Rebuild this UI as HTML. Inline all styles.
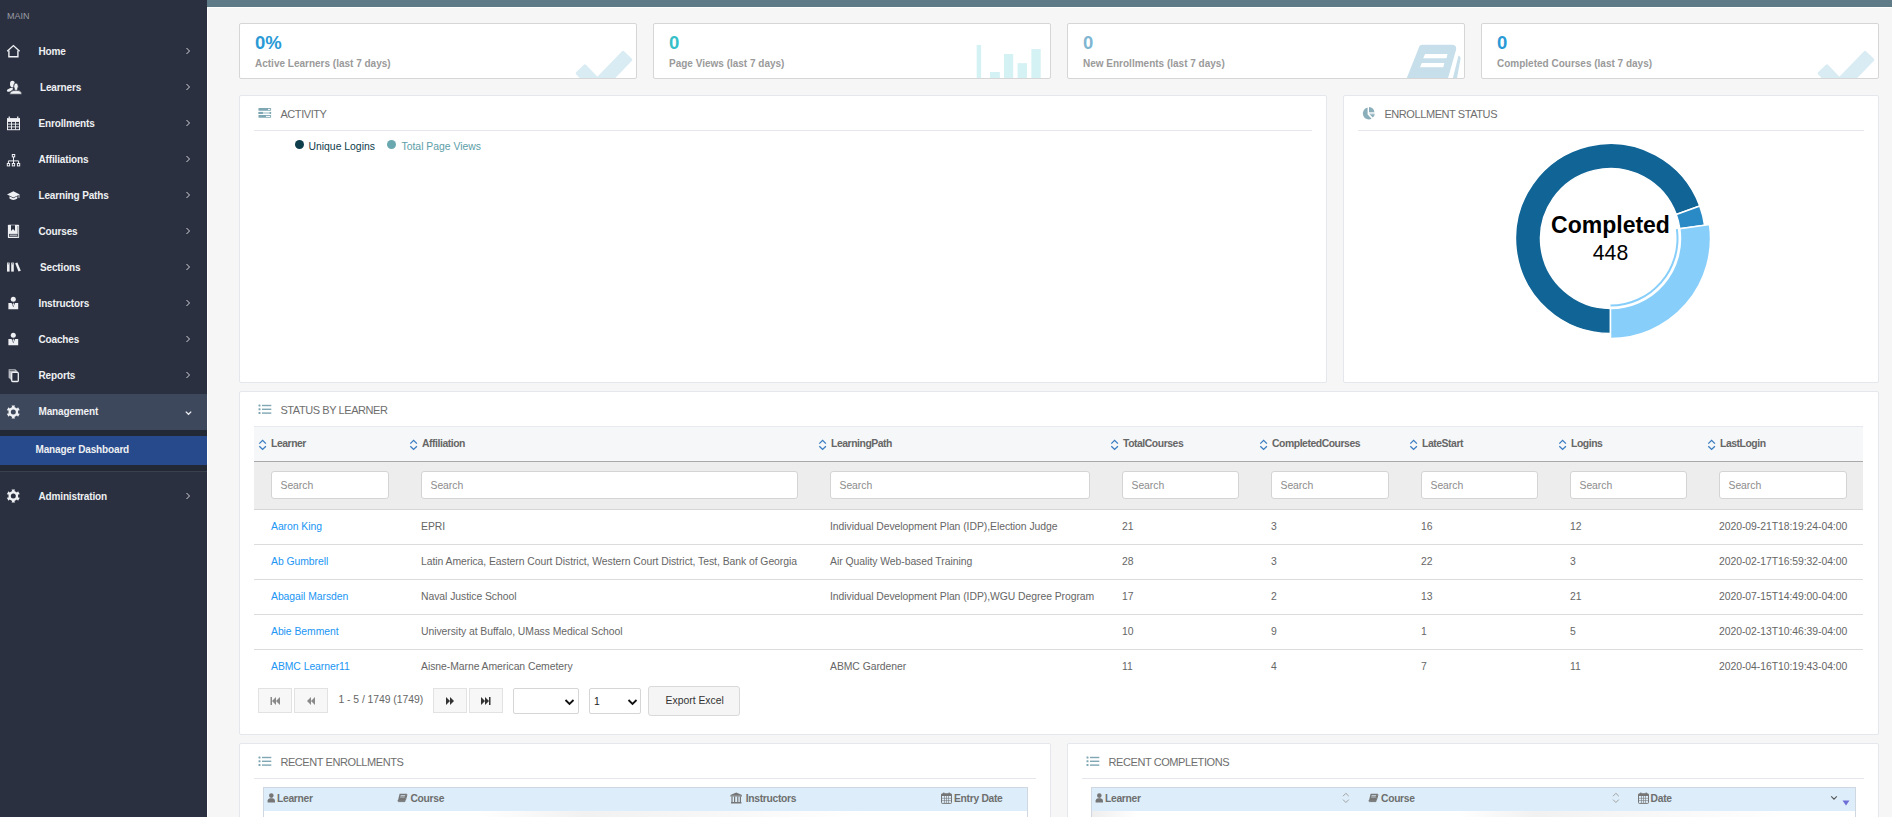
<!DOCTYPE html>
<html><head><meta charset="utf-8">
<style>
*{box-sizing:border-box;margin:0;padding:0}
html,body{width:1892px;height:817px;overflow:hidden;background:#f6f6f6;font-family:"Liberation Sans",sans-serif;}
.abs{position:absolute}
#side{position:absolute;left:0;top:0;width:207px;height:817px;background:#2b3040}
.st{position:absolute;line-height:36px;font-size:10px;font-weight:700;color:#eef0f3;white-space:nowrap;letter-spacing:-0.15px}
#side .main{position:absolute;left:7px;top:11px;font-size:9px;color:#9a9ca3;letter-spacing:0}
.mi{position:absolute;left:0;width:207px;height:36px}
.mi .t{position:absolute;left:38px;top:0;line-height:36px;font-size:10px;font-weight:700;color:#eef0f3;white-space:nowrap}
.mi .ch{position:absolute;left:185px;top:15px;width:5px;height:6px}
.mi .ic{position:absolute;left:6px;top:11px;width:15px;height:14px}
#topbar{position:absolute;left:207px;top:0;width:1685px;height:7px;background:#607b88}
#topline{position:absolute;left:207px;top:7px;width:1685px;height:1px;background:#fff}
#sideline{position:absolute;left:207px;top:7px;width:1px;height:810px;background:#fff}
.kpi{position:absolute;top:23px;width:398px;height:56px;background:#fff;border:1px solid #d6d6d6;border-radius:2px;overflow:hidden}
.kpi .v{position:absolute;left:15px;top:8px;font-size:18.5px;font-weight:700;line-height:22px}
.kpi .l{position:absolute;left:15px;top:34px;font-size:10px;font-weight:700;color:#9a9a9a;white-space:nowrap;line-height:12px}
.panel{position:absolute;background:#fff;border:1px solid #e4e7ec;border-radius:2px}
.ptitle{position:absolute;left:40.4px;font-size:11px;letter-spacing:-0.42px;color:#6e6e6e;white-space:nowrap;line-height:11px}
.psep{position:absolute;height:1px;background:#e4e7ec}
.th{font-size:10.4px;font-weight:700;color:#666;white-space:nowrap;line-height:11px;letter-spacing:-0.45px}
.th2{font-size:10.3px;font-weight:700;color:#6e6e6e;white-space:nowrap;line-height:11px;letter-spacing:-0.3px}
.inp{height:28px;background:#fff;border:1px solid #d4d4d4;border-radius:3px}
.inp span{position:absolute;left:8.5px;top:8px;font-size:10.4px;line-height:11px;color:#8c8c8c;letter-spacing:-0.05px}
.td{font-size:10.4px;line-height:11px;color:#666;white-space:nowrap;letter-spacing:-0.05px}
.lk{color:#2196f3}
.pbtn{width:34px;height:25px;background:#f7f7f7;border:1px solid #e2e2e2;display:flex;align-items:center;justify-content:center}
.sel{height:26px;background:#fff;border:1px solid #d6d6d6;border-radius:2px}
.r{font-size:10.2px;color:#666;white-space:nowrap}
</style></head>
<body>
<div id="side">
  <div class="main">MAIN</div>
  <div class="abs" style="left:0;top:394px;width:207px;height:36px;background:#3e485c"></div>
  <div class="abs" style="left:0;top:430px;width:207px;height:41px;background:#232835"></div>
  <div class="abs" style="left:0;top:436px;width:207px;height:29px;background:#264a8b"></div>
  <div class="abs" style="left:0;top:471px;width:207px;height:1px;background:#3a404d"></div>
  <div class="st" style="left:35.5px;top:432px;font-weight:700;letter-spacing:-0.15px">Manager Dashboard</div>
<!--SIDE-START-->
<svg class="abs" style="left:0;top:37px" width="28" height="28" viewBox="0 0 28 28"><g transform="translate(0,0)"><path d="M7.2,14.2 L13.4,8.6 L19.6,14.2" fill="none" stroke="#eef0f3" stroke-width="1.4"/><path d="M8.9,13.5 V19.8 H17.9 V13.5" fill="none" stroke="#eef0f3" stroke-width="1.4"/></g></svg>
<div class="st" style="left:38.5px;top:34px">Home</div>
<svg class="abs" style="left:184px;top:46px" width="8" height="10" viewBox="0 0 8 10"><path d="M2.5,2 L5.5,5 L2.5,8" fill="none" stroke="#d4d6db" stroke-width="1"/></svg>
<svg class="abs" style="left:0;top:73px" width="28" height="28" viewBox="0 0 28 28"><g transform="translate(0,-0.5)"><ellipse cx="12.4" cy="11.6" rx="2.4" ry="3.3" fill="#eef0f3"/><ellipse cx="9.9" cy="17.3" rx="3.3" ry="1.5" transform="rotate(-22 9.9 17.3)" fill="#eef0f3"/><ellipse cx="16" cy="13.9" rx="2.3" ry="3.5" fill="#eef0f3" stroke="#2b3040" stroke-width="0.9"/><rect x="15.2" y="16.5" width="1.6" height="2.5" fill="#eef0f3"/><path d="M9.6,21.7 Q10.3,18.3 13.6,18.1 H18.4 Q21.3,18.3 21.9,21.7 Z" fill="#eef0f3" stroke="#2b3040" stroke-width="0.6"/></g></svg>
<div class="st" style="left:40px;top:70px">Learners</div>
<svg class="abs" style="left:184px;top:82px" width="8" height="10" viewBox="0 0 8 10"><path d="M2.5,2 L5.5,5 L2.5,8" fill="none" stroke="#d4d6db" stroke-width="1"/></svg>
<svg class="abs" style="left:0;top:109px" width="28" height="28" viewBox="0 0 28 28"><g transform="translate(0,1.5)"><rect x="7" y="7.6" width="13" height="3.6" fill="#eef0f3"/><rect x="8.6" y="6" width="1.3" height="2" fill="#eef0f3"/><rect x="17.1" y="6" width="1.3" height="2" fill="#eef0f3"/><rect x="7.5" y="10.8" width="12" height="8.4" fill="none" stroke="#eef0f3" stroke-width="1"/><path d="M11.5,11 V19 M15.5,11 V19 M7.5,13.6 H19.5 M7.5,16.4 H19.5" stroke="#eef0f3" stroke-width="0.9"/></g></svg>
<div class="st" style="left:38.5px;top:106px">Enrollments</div>
<svg class="abs" style="left:184px;top:118px" width="8" height="10" viewBox="0 0 8 10"><path d="M2.5,2 L5.5,5 L2.5,8" fill="none" stroke="#d4d6db" stroke-width="1"/></svg>
<svg class="abs" style="left:0;top:145px" width="28" height="28" viewBox="0 0 28 28"><g transform="translate(0,1.5)"><rect x="12.3" y="8" width="2.4" height="2.4" fill="none" stroke="#eef0f3" stroke-width="1"/><path d="M13.5,10.4 V13.5 M8.4,17 V14.4 H18.6 V17 M13.5,13.5 V17" fill="none" stroke="#eef0f3" stroke-width="1"/><rect x="7.3" y="17" width="2.3" height="2.4" fill="none" stroke="#eef0f3" stroke-width="1"/><rect x="12.3" y="17" width="2.3" height="2.4" fill="none" stroke="#eef0f3" stroke-width="1"/><rect x="17.4" y="17" width="2.3" height="2.4" fill="none" stroke="#eef0f3" stroke-width="1"/></g></svg>
<div class="st" style="left:38.5px;top:142px">Affiliations</div>
<svg class="abs" style="left:184px;top:154px" width="8" height="10" viewBox="0 0 8 10"><path d="M2.5,2 L5.5,5 L2.5,8" fill="none" stroke="#d4d6db" stroke-width="1"/></svg>
<svg class="abs" style="left:0;top:181px" width="28" height="28" viewBox="0 0 28 28"><g transform="translate(0,0)"><path d="M7,13.5 L13.4,10.3 L19.8,13.5 L13.4,16.6 Z" fill="#eef0f3"/><path d="M9.5,15.3 V17.6 Q13.4,20.3 17.3,17.6 V15.3 L13.4,17.2 Z" fill="#eef0f3"/><path d="M19,13.8 V17" stroke="#eef0f3" stroke-width="0.8"/></g></svg>
<div class="st" style="left:38.5px;top:178px">Learning Paths</div>
<svg class="abs" style="left:184px;top:190px" width="8" height="10" viewBox="0 0 8 10"><path d="M2.5,2 L5.5,5 L2.5,8" fill="none" stroke="#d4d6db" stroke-width="1"/></svg>
<svg class="abs" style="left:0;top:217px" width="28" height="28" viewBox="0 0 28 28"><g transform="translate(0,0)"><rect x="7.9" y="7.7" width="11.2" height="13.4" rx="0.9" fill="#eef0f3"/><path d="M11,8.2 H15 V13.9 L13,12.1 L11,13.9 Z" fill="#2b3040"/><rect x="9.3" y="17.2" width="8.3" height="2.4" fill="#a3a7af" stroke="#2b3040" stroke-width="0.6"/><path d="M17.9,9 V20.3" stroke="#2b3040" stroke-width="0.5"/></g></svg>
<div class="st" style="left:38.5px;top:214px">Courses</div>
<svg class="abs" style="left:184px;top:226px" width="8" height="10" viewBox="0 0 8 10"><path d="M2.5,2 L5.5,5 L2.5,8" fill="none" stroke="#d4d6db" stroke-width="1"/></svg>
<svg class="abs" style="left:0;top:253px" width="28" height="28" viewBox="0 0 28 28"><g transform="translate(0,1.8)"><rect x="7" y="7.8" width="2.6" height="9" fill="#eef0f3"/><rect x="11.2" y="7.8" width="2.6" height="9" fill="#eef0f3"/><path d="M15.2,8.5 L17.4,7.8 L20.8,15.9 L18.5,16.8 Z" fill="#eef0f3"/><path d="M7.6,9 H9 M11.8,9 H13.2" stroke="#2b3040" stroke-width="0.6"/></g></svg>
<div class="st" style="left:40px;top:250px">Sections</div>
<svg class="abs" style="left:184px;top:262px" width="8" height="10" viewBox="0 0 8 10"><path d="M2.5,2 L5.5,5 L2.5,8" fill="none" stroke="#d4d6db" stroke-width="1"/></svg>
<svg class="abs" style="left:0;top:289px" width="28" height="28" viewBox="0 0 28 28"><g transform="translate(0,0)"><circle cx="13.3" cy="10.2" r="2.5" fill="#eef0f3"/><path d="M8.4,13.9 H11.6 L13.3,18.2 L15,13.9 H18.2 V20.2 H8.4 Z" fill="#eef0f3"/><path d="M13.3,13.3 L12.6,15.6 L13.3,17.6 L14,15.6 Z" fill="#eef0f3"/></g></svg>
<div class="st" style="left:38.5px;top:286px">Instructors</div>
<svg class="abs" style="left:184px;top:298px" width="8" height="10" viewBox="0 0 8 10"><path d="M2.5,2 L5.5,5 L2.5,8" fill="none" stroke="#d4d6db" stroke-width="1"/></svg>
<svg class="abs" style="left:0;top:325px" width="28" height="28" viewBox="0 0 28 28"><g transform="translate(0,0)"><circle cx="13.3" cy="10.2" r="2.5" fill="#eef0f3"/><path d="M8.4,13.9 H11.6 L13.3,18.2 L15,13.9 H18.2 V20.2 H8.4 Z" fill="#eef0f3"/><path d="M13.3,13.3 L12.6,15.6 L13.3,17.6 L14,15.6 Z" fill="#eef0f3"/></g></svg>
<div class="st" style="left:38.5px;top:322px">Coaches</div>
<svg class="abs" style="left:184px;top:334px" width="8" height="10" viewBox="0 0 8 10"><path d="M2.5,2 L5.5,5 L2.5,8" fill="none" stroke="#d4d6db" stroke-width="1"/></svg>
<svg class="abs" style="left:0;top:361px" width="28" height="28" viewBox="0 0 28 28"><g transform="translate(0,0)"><path d="M8.6,8.3 H15.4 L17.6,10.6 V19 H11 L8.6,16.6 Z" fill="#b9bcc2"/><path d="M9.6,9.6 H14.8" stroke="#2b3040" stroke-width="0.6"/><rect x="11.7" y="11.4" width="6.6" height="9.1" rx="0.9" fill="#2b3040" stroke="#eef0f3" stroke-width="1.3"/></g></svg>
<div class="st" style="left:38.5px;top:358px">Reports</div>
<svg class="abs" style="left:184px;top:370px" width="8" height="10" viewBox="0 0 8 10"><path d="M2.5,2 L5.5,5 L2.5,8" fill="none" stroke="#d4d6db" stroke-width="1"/></svg>
<svg class="abs" style="left:0;top:398px" width="28" height="28" viewBox="0 0 28 28"><g transform="translate(0,0)"><g transform="translate(13.3,14)"><path d="M-1.72,-6.47 L1.72,-6.47 L1.11,-4.88 L3.67,-3.40 L4.75,-4.73 L6.47,-1.75 L4.78,-1.48 L4.78,1.48 L6.47,1.75 L4.75,4.73 L3.67,3.40 L1.11,4.88 L1.72,6.47 L-1.72,6.47 L-1.11,4.88 L-3.67,3.40 L-4.75,4.73 L-6.47,1.75 L-4.78,1.48 L-4.78,-1.48 L-6.47,-1.75 L-4.75,-4.73 L-3.67,-3.40 L-1.11,-4.88Z" fill="#eef0f3"/><circle r="2.5" fill="#3e485c"/></g></g></svg>
<div class="st" style="left:38.5px;top:394px">Management</div>
<svg class="abs" style="left:184px;top:409.5px" width="9" height="7" viewBox="0 0 9 7"><path d="M1.8,1.6 L4.5,4.3 L7.2,1.6" fill="none" stroke="#eef0f3" stroke-width="1.3"/></svg>
<svg class="abs" style="left:0;top:482px" width="28" height="28" viewBox="0 0 28 28"><g transform="translate(0,0)"><g transform="translate(13.3,14)"><path d="M-1.72,-6.47 L1.72,-6.47 L1.11,-4.88 L3.67,-3.40 L4.75,-4.73 L6.47,-1.75 L4.78,-1.48 L4.78,1.48 L6.47,1.75 L4.75,4.73 L3.67,3.40 L1.11,4.88 L1.72,6.47 L-1.72,6.47 L-1.11,4.88 L-3.67,3.40 L-4.75,4.73 L-6.47,1.75 L-4.78,1.48 L-4.78,-1.48 L-6.47,-1.75 L-4.75,-4.73 L-3.67,-3.40 L-1.11,-4.88Z" fill="#eef0f3"/><circle r="2.5" fill="#2b3040"/></g></g></svg>
<div class="st" style="left:38.5px;top:479px">Administration</div>
<svg class="abs" style="left:184px;top:491px" width="8" height="10" viewBox="0 0 8 10"><path d="M2.5,2 L5.5,5 L2.5,8" fill="none" stroke="#d4d6db" stroke-width="1"/></svg>

<!--SIDE-END-->
</div>
<div id="topbar"></div>
<div id="topline"></div>
<div id="sideline"></div>

<!-- KPI cards -->
<div class="kpi" style="left:239px"><svg class="abs" style="left:0;top:0" width="396" height="54"><g transform="translate(-240,-24)"><path d="M584.92,66.26 L597.41,79.25 L623.08,52.75 L630.41,59.84 L597.39,93.95 L577.57,73.33Z" fill="#d9ecf4" stroke="#d9ecf4" stroke-width="3.6" stroke-linejoin="round"/></g></svg><div class="v" style="color:#2a9ad6">0%</div><div class="l">Active Learners (last 7 days)</div></div>
<div class="kpi" style="left:653px"><svg class="abs" style="left:0;top:0" width="396" height="54"><g transform="translate(-654,-24)" fill="#d4f1f4"><rect x="976.7" y="45" width="4.4" height="40"/><rect x="990" y="72" width="9.8" height="20"/><rect x="1004" y="54" width="9.2" height="30"/><rect x="1017.6" y="63.2" width="9.4" height="30"/><rect x="1031.4" y="49.1" width="9.3" height="40"/></g></svg><div class="v" style="color:#36bfc8">0</div><div class="l">Page Views (last 7 days)</div></div>
<div class="kpi" style="left:1067px"><svg class="abs" style="left:0;top:0" width="396" height="54"><g transform="translate(-1068,-24)"><path d="M1422.5,44.7 H1452 Q1457,44.7 1456,50 L1447.5,80 H1406 L1418.7,48 Q1419.5,44.7 1422.5,44.7 Z" fill="#c6dfea"/><path d="M1425,53.9 H1447.5 L1446.5,58.2 H1423.2 Z M1421.8,63 H1444.3 L1443.3,67.3 H1420 Z" fill="#fff"/><path d="M1458.5,55.5 Q1461,57 1460.5,59 L1456.7,80 H1452.4 Z" fill="#c6dfea"/></g></svg><div class="v" style="color:#7fb6d2">0</div><div class="l">New Enrollments (last 7 days)</div></div>
<div class="kpi" style="left:1481px"><svg class="abs" style="left:0;top:0" width="396" height="54"><g transform="translate(-240,-24)"><path d="M584.92,66.26 L597.41,79.25 L623.08,52.75 L630.41,59.84 L597.39,93.95 L577.57,73.33Z" fill="#d9ecf4" stroke="#d9ecf4" stroke-width="3.6" stroke-linejoin="round"/></g></svg><div class="v" style="color:#2a9ad6">0</div><div class="l">Completed Courses (last 7 days)</div></div>

<!-- Activity -->
<div class="panel" style="left:239px;top:95px;width:1088px;height:288px">
  <svg class="abs" style="left:18px;top:12px" width="14" height="11" viewBox="0 0 14 11"><rect x="0.4" y="0.1" width="12.7" height="2.6" rx="0.6" fill="#7fa6b3"/><rect x="0.4" y="3.9" width="12.7" height="2.1" rx="0.6" fill="#c9dbe1"/><rect x="0.4" y="3.9" width="4.5" height="2.1" fill="#7fa6b3"/><rect x="11.6" y="3.9" width="1.5" height="2.1" fill="#7fa6b3"/><rect x="0.4" y="7.1" width="12.7" height="2.6" rx="0.6" fill="#7fa6b3"/><rect x="10" y="0.9" width="2.2" height="1" fill="#fff"/><rect x="8" y="7.9" width="4.2" height="1" fill="#fff"/></svg>
  <div class="ptitle" style="top:12.9px">ACTIVITY</div>
  <div class="psep" style="left:14px;top:34px;width:1058px"></div>
  <div class="abs" style="left:54.5px;top:44px;width:9px;height:9px;border-radius:50%;background:#0e3d4c"></div>
  <div class="abs r" style="left:68.5px;top:45px;line-height:11px;font-size:10.4px;color:#0e3c4c">Unique Logins</div>
  <div class="abs" style="left:146.8px;top:44px;width:9px;height:9px;border-radius:50%;background:#6aa8b0"></div>
  <div class="abs r" style="left:161.5px;top:45px;line-height:11px;font-size:10.4px;color:#5c9ea8">Total Page Views</div>
</div>
<!-- Enrollment status -->
<div class="panel" style="left:1343px;top:95px;width:536px;height:288px">
  <svg class="abs" style="left:15.6px;top:9.6px" width="16" height="16" viewBox="0 0 16 16"><path d="M7.6,1.6 V8.6 L11.6,12.8 A6,6 0 1 1 7.6,1.6 Z" fill="#8aaeba"/><path d="M9,1 A6,6 0 0 1 14.4,6.2 H9 Z M9.6,8.2 H14.8 A6,6 0 0 1 12.8,11.6 Z" fill="#8aaeba"/><path d="M9.3,6.9 H14.6 V7.7 H9.3Z" fill="#c5d8de"/></svg>
  <div class="ptitle" style="top:13.2px">ENROLLMENT STATUS</div>
  <div class="psep" style="left:14px;top:34px;width:506px"></div>
</div>
<div class="abs" style="left:0;top:0;width:1892px;height:817px;pointer-events:none"><svg class="abs" style="left:0;top:0" width="1892" height="817">
<path d="M1610.50,333.50 A95,95 0 1 1 1699.77,206.01 L1676.28,214.56 A70,70 0 1 0 1610.50,308.50 Z" fill="#106496" stroke="#fff" stroke-width="1.5"/>
<path d="M1699.77,206.01 A95,95 0 0 1 1704.58,225.28 L1679.82,228.76 A70,70 0 0 0 1676.28,214.56 Z" fill="#2a8ac6" stroke="#fff" stroke-width="1.5"/>
<path d="M1709.53,224.58 A100,100 0 0 1 1610.50,338.50 L1610.50,308.50 A70,70 0 0 0 1679.82,228.76 Z" fill="#87cefa" stroke="#fff" stroke-width="1.5"/>
<path d="M1677.84,229.04 A68,68 0 0 1 1610.50,306.50 L1610.50,304.50 A66,66 0 0 0 1675.86,229.31 Z" fill="#87cefa"/>
</svg></div>
<div class="abs" style="left:1540px;top:212px;width:141px;text-align:center;font-size:23px;font-weight:700;color:#000;line-height:26px">Completed</div>
<div class="abs" style="left:1540px;top:241.5px;width:141px;text-align:center;font-size:21.2px;color:#000;line-height:22px">448</div>
<!-- Status by learner -->
<div class="panel" style="left:239px;top:391px;width:1640px;height:344px"></div>
<svg class="abs" style="left:257px;top:403px" width="16" height="13" viewBox="0 0 16 13"><g fill="#7fa6b3"><rect x="1.5" y="1.5" width="2" height="2" rx="0.5"/><rect x="1.5" y="5.3" width="2" height="2" rx="0.5"/><rect x="1.5" y="9.1" width="2" height="2" rx="0.5"/><rect x="5" y="1.8" width="9.3" height="1.4"/><rect x="5" y="5.6" width="9.3" height="1.4"/><rect x="5" y="9.4" width="9.3" height="1.4"/></g></svg>
<div class="ptitle" style="left:280.4px;top:405px">STATUS BY LEARNER</div>
<div class="abs" style="left:254px;top:426px;width:1609px;height:36px;background:#f6f7f9;border-top:1px solid #e6e9ee;border-bottom:1px solid #a9a9a9"></div>
<div class="abs" style="left:254px;top:462px;width:1609px;height:48px;background:#ededed;border-bottom:1px solid #d6d6d6"></div>
<svg class="abs" style="left:257px;top:438px" width="10" height="13" viewBox="0 0 10 13"><path d="M2.3,5.6 L5.6,2.4 L8.9,5.6 M2.3,8.2 L5.6,11.4 L8.9,8.2" fill="none" stroke="#3a7cc0" stroke-width="1.3"/></svg>
<div class="abs th" style="left:271px;top:437.8px">Learner</div>
<div class="abs inp" style="left:271px;top:471px;width:118px"><span>Search</span></div>
<svg class="abs" style="left:408px;top:438px" width="10" height="13" viewBox="0 0 10 13"><path d="M2.3,5.6 L5.6,2.4 L8.9,5.6 M2.3,8.2 L5.6,11.4 L8.9,8.2" fill="none" stroke="#3a7cc0" stroke-width="1.3"/></svg>
<div class="abs th" style="left:422px;top:437.8px">Affiliation</div>
<div class="abs inp" style="left:421px;top:471px;width:377px"><span>Search</span></div>
<svg class="abs" style="left:817px;top:438px" width="10" height="13" viewBox="0 0 10 13"><path d="M2.3,5.6 L5.6,2.4 L8.9,5.6 M2.3,8.2 L5.6,11.4 L8.9,8.2" fill="none" stroke="#3a7cc0" stroke-width="1.3"/></svg>
<div class="abs th" style="left:831px;top:437.8px">LearningPath</div>
<div class="abs inp" style="left:830px;top:471px;width:260px"><span>Search</span></div>
<svg class="abs" style="left:1109px;top:438px" width="10" height="13" viewBox="0 0 10 13"><path d="M2.3,5.6 L5.6,2.4 L8.9,5.6 M2.3,8.2 L5.6,11.4 L8.9,8.2" fill="none" stroke="#3a7cc0" stroke-width="1.3"/></svg>
<div class="abs th" style="left:1123px;top:437.8px">TotalCourses</div>
<div class="abs inp" style="left:1122px;top:471px;width:117px"><span>Search</span></div>
<svg class="abs" style="left:1258px;top:438px" width="10" height="13" viewBox="0 0 10 13"><path d="M2.3,5.6 L5.6,2.4 L8.9,5.6 M2.3,8.2 L5.6,11.4 L8.9,8.2" fill="none" stroke="#3a7cc0" stroke-width="1.3"/></svg>
<div class="abs th" style="left:1272px;top:437.8px">CompletedCourses</div>
<div class="abs inp" style="left:1271px;top:471px;width:118px"><span>Search</span></div>
<svg class="abs" style="left:1408px;top:438px" width="10" height="13" viewBox="0 0 10 13"><path d="M2.3,5.6 L5.6,2.4 L8.9,5.6 M2.3,8.2 L5.6,11.4 L8.9,8.2" fill="none" stroke="#3a7cc0" stroke-width="1.3"/></svg>
<div class="abs th" style="left:1422px;top:437.8px">LateStart</div>
<div class="abs inp" style="left:1421px;top:471px;width:117px"><span>Search</span></div>
<svg class="abs" style="left:1557px;top:438px" width="10" height="13" viewBox="0 0 10 13"><path d="M2.3,5.6 L5.6,2.4 L8.9,5.6 M2.3,8.2 L5.6,11.4 L8.9,8.2" fill="none" stroke="#3a7cc0" stroke-width="1.3"/></svg>
<div class="abs th" style="left:1571px;top:437.8px">Logins</div>
<div class="abs inp" style="left:1570px;top:471px;width:117px"><span>Search</span></div>
<svg class="abs" style="left:1706px;top:438px" width="10" height="13" viewBox="0 0 10 13"><path d="M2.3,5.6 L5.6,2.4 L8.9,5.6 M2.3,8.2 L5.6,11.4 L8.9,8.2" fill="none" stroke="#3a7cc0" stroke-width="1.3"/></svg>
<div class="abs th" style="left:1720px;top:437.8px">LastLogin</div>
<div class="abs inp" style="left:1719px;top:471px;width:128px"><span>Search</span></div>
<div class="abs" style="left:254px;top:544px;width:1609px;height:1px;background:#dcdcdc"></div>
<div class="abs td lk" style="left:271px;top:521px">Aaron King</div>
<div class="abs td" style="left:421px;top:521px">EPRI</div>
<div class="abs td" style="left:830px;top:521px">Individual Development Plan (IDP),Election Judge</div>
<div class="abs td" style="left:1122px;top:521px">21</div>
<div class="abs td" style="left:1271px;top:521px">3</div>
<div class="abs td" style="left:1421px;top:521px">16</div>
<div class="abs td" style="left:1570px;top:521px">12</div>
<div class="abs td" style="left:1719px;top:521px">2020-09-21T18:19:24-04:00</div>
<div class="abs" style="left:254px;top:579px;width:1609px;height:1px;background:#dcdcdc"></div>
<div class="abs td lk" style="left:271px;top:556px">Ab Gumbrell</div>
<div class="abs td" style="left:421px;top:556px">Latin America, Eastern Court District, Western Court District, Test, Bank of Georgia</div>
<div class="abs td" style="left:830px;top:556px">Air Quality Web-based Training</div>
<div class="abs td" style="left:1122px;top:556px">28</div>
<div class="abs td" style="left:1271px;top:556px">3</div>
<div class="abs td" style="left:1421px;top:556px">22</div>
<div class="abs td" style="left:1570px;top:556px">3</div>
<div class="abs td" style="left:1719px;top:556px">2020-02-17T16:59:32-04:00</div>
<div class="abs" style="left:254px;top:614px;width:1609px;height:1px;background:#dcdcdc"></div>
<div class="abs td lk" style="left:271px;top:591px">Abagail Marsden</div>
<div class="abs td" style="left:421px;top:591px">Naval Justice School</div>
<div class="abs td" style="left:830px;top:591px">Individual Development Plan (IDP),WGU Degree Program</div>
<div class="abs td" style="left:1122px;top:591px">17</div>
<div class="abs td" style="left:1271px;top:591px">2</div>
<div class="abs td" style="left:1421px;top:591px">13</div>
<div class="abs td" style="left:1570px;top:591px">21</div>
<div class="abs td" style="left:1719px;top:591px">2020-07-15T14:49:00-04:00</div>
<div class="abs" style="left:254px;top:649px;width:1609px;height:1px;background:#dcdcdc"></div>
<div class="abs td lk" style="left:271px;top:626px">Abie Bemment</div>
<div class="abs td" style="left:421px;top:626px">University at Buffalo, UMass Medical School</div>
<div class="abs td" style="left:830px;top:626px"></div>
<div class="abs td" style="left:1122px;top:626px">10</div>
<div class="abs td" style="left:1271px;top:626px">9</div>
<div class="abs td" style="left:1421px;top:626px">1</div>
<div class="abs td" style="left:1570px;top:626px">5</div>
<div class="abs td" style="left:1719px;top:626px">2020-02-13T10:46:39-04:00</div>
<div class="abs td lk" style="left:271px;top:661px">ABMC Learner11</div>
<div class="abs td" style="left:421px;top:661px">Aisne-Marne American Cemetery</div>
<div class="abs td" style="left:830px;top:661px">ABMC Gardener</div>
<div class="abs td" style="left:1122px;top:661px">11</div>
<div class="abs td" style="left:1271px;top:661px">4</div>
<div class="abs td" style="left:1421px;top:661px">7</div>
<div class="abs td" style="left:1570px;top:661px">11</div>
<div class="abs td" style="left:1719px;top:661px">2020-04-16T10:19:43-04:00</div>
<div class="abs pbtn" style="left:258px;top:688px"><svg width="12" height="10" viewBox="0 0 12 10"><path d="M1.5,1 H3 V9 H1.5Z M3,5 L7,1 V9Z M7,5 L11,1 V9Z" fill="#8a8a8a"/></svg></div>
<div class="abs pbtn" style="left:294px;top:688px"><svg width="12" height="10" viewBox="0 0 12 10"><path d="M2,5 L6,1 V9Z M6,5 L10,1 V9Z" fill="#8a8a8a"/></svg></div>
<div class="abs td" style="left:338.5px;top:694px">1 - 5 / 1749 (1749)</div>
<div class="abs pbtn" style="left:433px;top:688px"><svg width="12" height="10" viewBox="0 0 12 10"><path d="M2,1 L6,5 L2,9Z M6,1 L10,5 L6,9Z" fill="#333"/></svg></div>
<div class="abs pbtn" style="left:469px;top:688px"><svg width="12" height="10" viewBox="0 0 12 10"><path d="M1,1 L5,5 L1,9Z M5,1 L9,5 L5,9Z M9,1 H10.5 V9 H9Z" fill="#333"/></svg></div>
<div class="abs sel" style="left:513px;top:688px;width:66px"><svg class="abs" style="left:50px;top:9px" width="11" height="8" viewBox="0 0 11 8"><path d="M1.5,2 L5.5,6 L9.5,2" fill="none" stroke="#111" stroke-width="1.8"/></svg></div>
<div class="abs sel" style="left:589px;top:688px;width:52px"><span class="abs" style="left:4px;top:7px;font-size:10.4px;color:#222;line-height:11px">1</span><svg class="abs" style="left:37px;top:9px" width="11" height="8" viewBox="0 0 11 8"><path d="M1.5,2 L5.5,6 L9.5,2" fill="none" stroke="#111" stroke-width="1.8"/></svg></div>
<div class="abs" style="left:648px;top:686px;width:92px;height:30px;background:#f5f5f5;border:1px solid #d9d9d9;border-radius:3px"><span class="abs" style="left:16.5px;top:7.5px;font-size:10.4px;color:#333;line-height:11px;white-space:nowrap">Export Excel</span></div>
<!-- Recent enrollments -->
<div class="panel" style="left:239px;top:743px;width:812px;height:90px"></div>
<svg class="abs" style="left:257px;top:755px" width="16" height="13" viewBox="0 0 16 13"><g fill="#7fa6b3"><rect x="1.5" y="1.5" width="2" height="2" rx="0.5"/><rect x="1.5" y="5.3" width="2" height="2" rx="0.5"/><rect x="1.5" y="9.1" width="2" height="2" rx="0.5"/><rect x="5" y="1.8" width="9.3" height="1.4"/><rect x="5" y="5.6" width="9.3" height="1.4"/><rect x="5" y="9.4" width="9.3" height="1.4"/></g></svg>
<div class="ptitle" style="left:280.4px;top:756.6px">RECENT ENROLLMENTS</div>
<div class="abs" style="left:254px;top:778px;width:782px;height:1px;background:#e4e7ec"></div>
<div class="abs" style="left:263px;top:787px;width:765px;height:40px;background:#ddeefa;border:1px solid #cfd8e0;border-bottom:none"></div>
<div class="abs" style="left:264px;top:811px;width:763px;height:10px;background:linear-gradient(90deg,#fff 0%,#fff 28%,#f1f1f1 42%,#f8f8f8 62%,#fff 78%)"></div>
<svg class="abs" style="left:266.5px;top:793px" width="9" height="10" viewBox="0 0 9 10"><circle cx="4.3" cy="2.6" r="2.3" fill="#767676"/><path d="M0.6,9.6 V7.6 Q0.8,5.4 3,5.2 H5.6 Q7.8,5.4 8,7.6 V9.6 Z" fill="#767676"/></svg>
<div class="abs th2" style="left:277px;top:792.5px">Learner</div>
<svg class="abs" style="left:397px;top:793px" width="11" height="10" viewBox="0 0 11 10"><path d="M2.6,0.8 H10 L8.2,7.4 H1 Z" fill="#767676"/><path d="M1,7.4 H8.2 L7.9,8.6 H1.4 Q0.6,8.4 1,7.4Z M8.5,7 L10,1.5" fill="none" stroke="#767676" stroke-width="1"/><path d="M3.6,2.5 H8.2 M3.2,4 H7.8" stroke="#ddeefa" stroke-width="0.7"/></svg>
<div class="abs th2" style="left:410.4px;top:792.5px">Course</div>
<svg class="abs" style="left:730px;top:792px" width="13" height="12" viewBox="0 0 13 12"><path d="M6.2,0.4 L12,3 V3.8 H0.4 V3 Z" fill="#767676"/><path d="M1,10 H11.4 V11.4 H1Z M0.4,3.8 H12 V4.6 H0.4Z" fill="#767676"/><path d="M2,4.6 V10 M4.6,4.6 V10 M7.8,4.6 V10 M10.4,4.6 V10" stroke="#767676" stroke-width="1.2"/></svg>
<div class="abs th2" style="left:745.7px;top:792.5px">Instructors</div>
<svg class="abs" style="left:941px;top:792px" width="11" height="12" viewBox="0 0 11 12"><rect x="0.5" y="1.8" width="10" height="9.6" rx="0.8" fill="none" stroke="#767676" stroke-width="1"/><rect x="0.5" y="1.8" width="10" height="2.2" fill="#767676"/><path d="M2.8,0.6 V2.6 M8.2,0.6 V2.6" stroke="#767676" stroke-width="1.2"/><path d="M3.5,4 V11 M5.5,4 V11 M7.5,4 V11 M0.5,6.3 H10.5 M0.5,8.6 H10.5" stroke="#767676" stroke-width="0.6"/></svg>
<div class="abs th2" style="left:954px;top:792.5px">Entry Date</div>
<!-- Recent completions -->
<div class="panel" style="left:1067px;top:743px;width:812px;height:90px"></div>
<svg class="abs" style="left:1085px;top:755px" width="16" height="13" viewBox="0 0 16 13"><g fill="#7fa6b3"><rect x="1.5" y="1.5" width="2" height="2" rx="0.5"/><rect x="1.5" y="5.3" width="2" height="2" rx="0.5"/><rect x="1.5" y="9.1" width="2" height="2" rx="0.5"/><rect x="5" y="1.8" width="9.3" height="1.4"/><rect x="5" y="5.6" width="9.3" height="1.4"/><rect x="5" y="9.4" width="9.3" height="1.4"/></g></svg>
<div class="ptitle" style="left:1108.5px;top:756.6px">RECENT COMPLETIONS</div>
<div class="abs" style="left:1082px;top:778px;width:782px;height:1px;background:#e4e7ec"></div>
<div class="abs" style="left:1091px;top:787px;width:765px;height:40px;background:#ddeefa;border:1px solid #cfd8e0;border-bottom:none"></div>
<div class="abs" style="left:1092px;top:811px;width:763px;height:10px;background:linear-gradient(90deg,#eeeeee 0%,#fff 6%,#fff 48%,#f1f1f1 58%,#f8f8f8 75%,#fff 92%)"></div>
<svg class="abs" style="left:1094.5px;top:793px" width="9" height="10" viewBox="0 0 9 10"><circle cx="4.3" cy="2.6" r="2.3" fill="#767676"/><path d="M0.6,9.6 V7.6 Q0.8,5.4 3,5.2 H5.6 Q7.8,5.4 8,7.6 V9.6 Z" fill="#767676"/></svg>
<div class="abs th2" style="left:1105px;top:792.5px">Learner</div>
<svg class="abs" style="left:1342px;top:792px" width="8" height="12" viewBox="0 0 8 12"><path d="M1,4.2 L3.9,1.3 L6.8,4.2 M1,7.6 L3.9,10.5 L6.8,7.6" fill="none" stroke="#a0a0a0" stroke-width="1"/></svg>
<svg class="abs" style="left:1368px;top:793px" width="11" height="10" viewBox="0 0 11 10"><path d="M2.6,0.8 H10 L8.2,7.4 H1 Z" fill="#767676"/><path d="M1,7.4 H8.2 L7.9,8.6 H1.4 Q0.6,8.4 1,7.4Z M8.5,7 L10,1.5" fill="none" stroke="#767676" stroke-width="1"/><path d="M3.6,2.5 H8.2 M3.2,4 H7.8" stroke="#ddeefa" stroke-width="0.7"/></svg>
<div class="abs th2" style="left:1381px;top:792.5px">Course</div>
<svg class="abs" style="left:1612px;top:792px" width="8" height="12" viewBox="0 0 8 12"><path d="M1,4.2 L3.9,1.3 L6.8,4.2 M1,7.6 L3.9,10.5 L6.8,7.6" fill="none" stroke="#a0a0a0" stroke-width="1"/></svg>
<svg class="abs" style="left:1638px;top:792px" width="11" height="12" viewBox="0 0 11 12"><rect x="0.5" y="1.8" width="10" height="9.6" rx="0.8" fill="none" stroke="#767676" stroke-width="1"/><rect x="0.5" y="1.8" width="10" height="2.2" fill="#767676"/><path d="M2.8,0.6 V2.6 M8.2,0.6 V2.6" stroke="#767676" stroke-width="1.2"/><path d="M3.5,4 V11 M5.5,4 V11 M7.5,4 V11 M0.5,6.3 H10.5 M0.5,8.6 H10.5" stroke="#767676" stroke-width="0.6"/></svg>
<div class="abs th2" style="left:1650.6px;top:792.5px">Date</div>
<svg class="abs" style="left:1829px;top:794px" width="10" height="8" viewBox="0 0 10 8"><path d="M2.2,2.4 L5,5.2 L7.8,2.4" fill="none" stroke="#555" stroke-width="1.1"/></svg>
<svg class="abs" style="left:1841px;top:799px" width="10" height="8" viewBox="0 0 10 8"><path d="M1.5,1.5 H8.5 L5,6.5 Z" fill="#6f6fd8"/></svg>
</body></html>
